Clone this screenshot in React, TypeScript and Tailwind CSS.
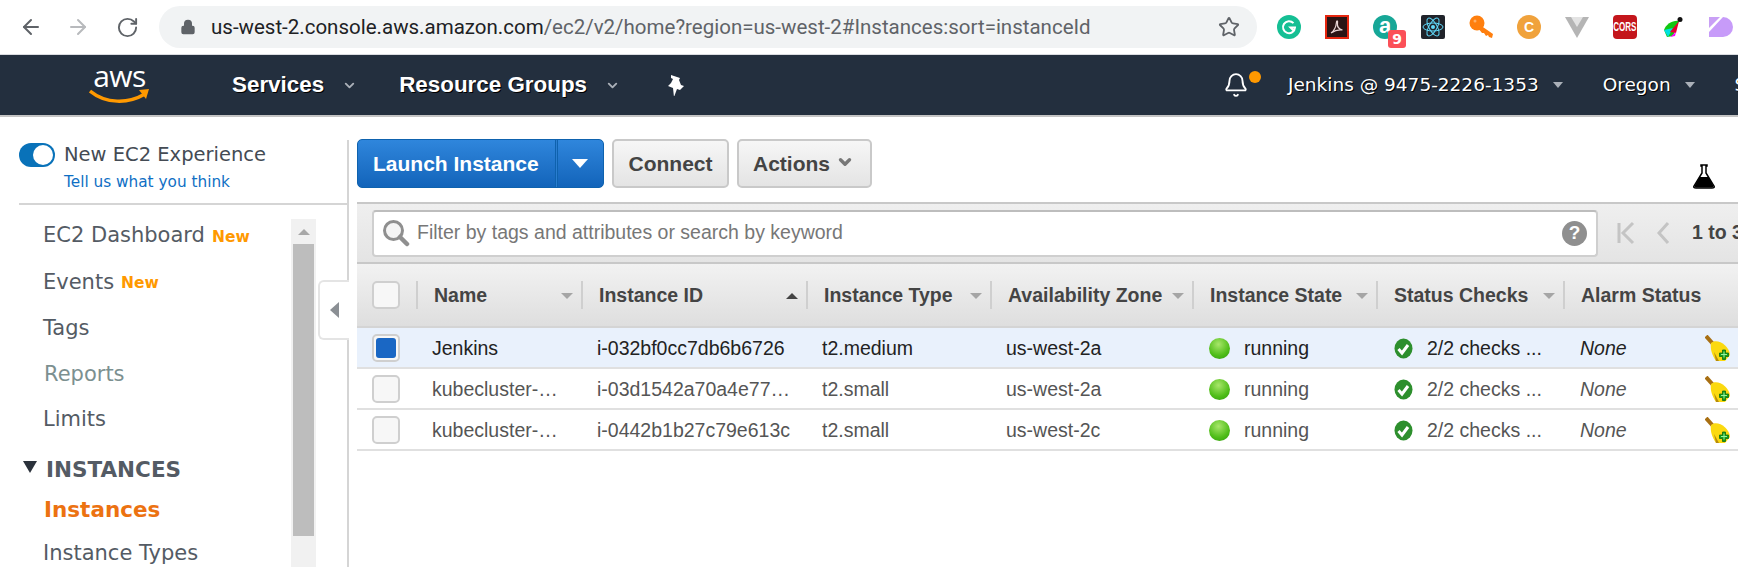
import { ArrowLeft, ArrowRight, RotateCw, Lock, Star, Bell, ChevronDown } from "lucide-react";

const cols = "grid grid-cols-[59px_165px_225px_184px_202px_184px_187px_174px]";

const headers = ["Name", "Instance ID", "Instance Type", "Availability Zone", "Instance State", "Status Checks", "Alarm Status"];

const rows = [
  { name: "Jenkins", id: "i-032bf0cc7db6b6726", type: "t2.medium", zone: "us-west-2a", selected: true },
  { name: "kubecluster-…", id: "i-03d1542a70a4e77…", type: "t2.small", zone: "us-west-2a", selected: false },
  { name: "kubecluster-…", id: "i-0442b1b27c79e613c", type: "t2.small", zone: "us-west-2c", selected: false },
];

function Extensions() {
  return (
    <div className="flex items-center gap-[24px] ml-[20px] flex-none">
      <div className="w-6 h-6 rounded-full bg-[#15bf94] flex items-center justify-center flex-none">
        <svg width="16" height="16" viewBox="0 0 16 16" fill="none" stroke="#fff" strokeWidth="2">
          <path d="M12.5 4.2A6 6 0 1 0 14 8.5H9.5l3 3" />
        </svg>
      </div>
      <div className="w-6 h-6 bg-[#2a1414] border-2 border-[#e5260f] flex items-center justify-center flex-none">
        <svg width="16" height="16" viewBox="0 0 16 16" fill="none" stroke="#e8d5d5" strokeWidth="1.2">
          <path d="M2 14c3-2 5-6 5.5-11 .2-2 1.5-1 1 1-.5 3 1 6 5 7-3-.5-7 0-11.5 3z" />
        </svg>
      </div>
      <div className="relative w-6 h-6 rounded-full bg-[#17a797] flex items-center justify-center flex-none">
        <span className="text-white font-bold text-[22px] leading-none -mt-[3px] font-['Liberation_Sans',sans-serif]">a</span>
        <span className="absolute left-[15px] top-[15px] w-[18px] h-[18px] rounded-[3px] bg-[#fb5058] text-white text-[14px] font-bold leading-[18px] text-center font-['DejaVu_Sans',sans-serif]">9</span>
      </div>
      <div className="w-6 h-6 rounded-[2px] bg-[#20232a] flex items-center justify-center flex-none">
        <svg width="22" height="22" viewBox="-11 -11 22 22" fill="none" stroke="#61dafb" strokeWidth="1">
          <circle r="2" fill="#61dafb" stroke="none" />
          <ellipse rx="10" ry="4" />
          <ellipse rx="10" ry="4" transform="rotate(60)" />
          <ellipse rx="10" ry="4" transform="rotate(120)" />
        </svg>
      </div>
      <svg width="24" height="24" viewBox="0 0 24 24" className="flex-none">
        <circle cx="8" cy="8" r="7.5" fill="#ff7f0e" />
        <path d="M11 10l13 9-1 4-3-1-1-2-2 1-2-3-2 0-4-5z" fill="#ff7f0e" />
        <circle cx="6" cy="6" r="1.5" fill="#ffb066" />
      </svg>
      <div className="w-6 h-6 rounded-full bg-[#f0a23c] flex items-center justify-center text-white text-[14px] font-bold flex-none font-['Liberation_Sans',sans-serif]">C</div>
      <svg width="24" height="24" viewBox="0 0 24 24" className="flex-none">
        <polygon points="0,2 24,2 12,23" fill="#b5b5b5" />
        <polygon points="6,2 18,2 12,12" fill="#e3e3e3" />
      </svg>
      <div className="w-6 h-6 rounded-[4px] bg-[#c4161c] flex items-center justify-center overflow-hidden text-white text-[13px] font-bold flex-none font-['Liberation_Sans',sans-serif]">
        <span className="scale-x-[0.62] flex-none">CORS</span>
      </div>
      <svg width="24" height="24" viewBox="0 0 24 24" className="flex-none">
        <path d="M3 15C5 9 12 5 18 6L12 21 6 22z" fill="#12c712" />
        <path d="M3 15l9-2-5 9z" fill="#00e0e0" />
        <path d="M9 17l9-11-3 12z" fill="#e5002e" />
        <path d="M9 22l6-5-1 4z" fill="#f0f" />
        <circle cx="19" cy="4.5" r="2.5" fill="#111" />
      </svg>
      <svg width="24" height="24" viewBox="0 0 24 24" className="flex-none">
        <path d="M0 2h11L0 13z" fill="#c9a0f5" />
        <path d="M0 17L14 2a10 10 0 0 1 0 20H8l-3 0H0z" fill="#c79bf9" />
      </svg>
    </div>
  );
}

function BrowserBar() {
  return (
    <div className="h-[55px] border-b border-[#dadce0] bg-white flex items-center pl-[19px] pr-0">
      <ArrowLeft size={24} strokeWidth={2} className="text-[#5f6368] flex-none" />
      <ArrowRight size={24} strokeWidth={2} className="text-[#b8babd] ml-[23px] flex-none" />
      <RotateCw size={23} strokeWidth={2} className="text-[#5f6368] ml-[26px] flex-none" />
      <div className="ml-[20px] w-[1098px] h-[42px] rounded-full bg-[#f1f3f4] flex items-center pl-[21px] pr-[17px] flex-none">
        <Lock size={16} fill="#5f6368" className="text-[#5f6368] flex-none" />
        <div className="ml-[15px] text-[20.5px] text-[#202124] whitespace-nowrap font-['Roboto',sans-serif] flex-1">
          us-west-2.console.aws.amazon.com
          <span className="text-[#5f6368]">/ec2/v2/home?region=us-west-2#Instances:sort=instanceId</span>
        </div>
        <Star size={22} strokeWidth={2} className="text-[#5f6368] flex-none" />
      </div>
      <Extensions />
    </div>
  );
}

function NavBar() {
  return (
    <div className="h-[60px] bg-[#232f3e] flex items-center text-white whitespace-nowrap overflow-hidden [text-shadow:1px_1px_0_#000]">
      <div className="ml-[89px] w-[61px] flex-none flex flex-col items-center">
        <span className="text-[30px] leading-[26px] tracking-[-0.5px] font-['Open_Sans',sans-serif] [text-shadow:none] -mt-[3px]">aws</span>
        <svg width="61" height="15" viewBox="0 0 61 15" fill="none">
          <path d="M1 2c16 13 38 13 55 3" stroke="#f90" strokeWidth="3.5" />
          <path d="M50 1l10-1-3 10z" fill="#f90" />
        </svg>
      </div>
      <span className="ml-[82px] flex-none text-[22.4px] font-bold font-['Liberation_Sans',sans-serif]">Services</span>
      <ChevronDown size={15} strokeWidth={3} className="ml-[18px] flex-none text-[#aab0b8]" />
      <span className="ml-[42px] flex-none text-[22.4px] font-bold font-['Liberation_Sans',sans-serif]">Resource Groups</span>
      <ChevronDown size={15} strokeWidth={3} className="ml-[18px] flex-none text-[#aab0b8]" />
      <svg width="20" height="22" viewBox="0 0 20 22" className="ml-[46px] flex-none" fill="#fff">
        <path d="M5 1l9 3-1 2 2 5 3 1-4 4-3-1-3 8-1-9-5-2 3-3 2-4-2-1z" />
      </svg>
      <div className="relative ml-[537px] flex-none w-[25px] h-[26px]">
        <Bell size={26} strokeWidth={1.7} />
        <span className="absolute -right-[13px] -top-[1px] w-3 h-3 rounded-full bg-[#f90]" />
      </div>
      <span className="ml-[40px] flex-none text-[18.5px] font-['DejaVu_Sans',sans-serif]">Jenkins @ 9475-2226-1353</span>
      <span className="ml-[14px] flex-none w-0 h-0 border-x-[5px] border-x-transparent border-t-[6px] border-t-[#aab0b8]" />
      <span className="ml-[40px] flex-none text-[18.5px] font-['DejaVu_Sans',sans-serif]">Oregon</span>
      <span className="ml-[14px] flex-none w-0 h-0 border-x-[5px] border-x-transparent border-t-[6px] border-t-[#aab0b8]" />
      <span className="ml-[40px] flex-none text-[18.5px] font-['DejaVu_Sans',sans-serif]">Support</span>
    </div>
  );
}

function NewTag() {
  return <span className="ml-[7px] mt-[3px] text-[15.5px] font-bold text-[#f90] font-['DejaVu_Sans',sans-serif]">New</span>;
}

function Sidebar() {
  return (
    <aside className="relative w-[349px] flex-none h-full flex flex-col font-['DejaVu_Sans',sans-serif]">
      <div className="h-[88px] flex-none pt-[26px] ml-[19px] border-b-2 border-[#d5d5d5] mr-[2px]">
        <div className="flex items-center h-[24px]">
          <div className="w-[36px] h-[24px] rounded-full bg-[#0972b9] flex items-center justify-end pr-[2px] flex-none">
            <span className="w-5 h-5 rounded-full bg-white" />
          </div>
          <span className="ml-[9px] text-[19.5px] text-[#444b54] leading-[24px]">New EC2 Experience</span>
        </div>
        <div className="ml-[45px] mt-[3px] text-[15.3px] leading-[24px] text-[#0f6fc4]">Tell us what you think</div>
      </div>
      <div className="flex flex-1 min-h-0 mr-[33px]">
        <div className="flex-1 pt-[8px] text-[21px] text-[#545b64] whitespace-nowrap">
          <div className="h-[46px] pl-[43px] flex items-center">EC2 Dashboard<NewTag /></div>
          <div className="h-[47px] pl-[43px] flex items-center">Events<NewTag /></div>
          <div className="h-[46px] pl-[43px] flex items-center">Tags</div>
          <div className="h-[45px] pl-[44px] flex items-center text-[#7c9090]">Reports</div>
          <div className="h-[45px] pl-[43px] flex items-center">Limits</div>
          <div className="mt-[8px] h-[40px] pl-[23px] flex items-center font-bold text-[21.5px]">
            <span className="w-0 h-0 border-x-[7.5px] border-x-transparent border-t-[12px] border-t-[#2b323b] -mt-[6px]" />
            <span className="ml-[9px]">INSTANCES</span>
          </div>
          <div className="h-[40px] pl-[44px] flex items-center font-bold text-[21.5px] text-[#ec7211]">Instances</div>
          <div className="h-[47px] pl-[43px] flex items-center">Instance Types</div>
        </div>
        <div className="w-[25px] flex-none mt-[14px] bg-[#f1f1f1] flex flex-col items-center">
          <div className="h-[25px] flex items-center justify-center flex-none">
            <span className="w-0 h-0 border-x-[6px] border-x-transparent border-b-[6px] border-b-[#a8a8a8]" />
          </div>
          <div className="w-[21px] h-[292px] bg-[#bdbdbd] flex-none" />
        </div>
      </div>
      <div className="absolute right-0 top-[23px] bottom-0 w-[2px] bg-[#d5d5d5]" />
      <div className="absolute right-0 top-[163px] w-[31px] h-[60px] bg-white border-2 border-r-0 border-[#e4e4e4] rounded-l-[6px] flex items-center justify-center">
        <span className="w-0 h-0 border-y-[8px] border-y-transparent border-r-[9px] border-r-[#8b8f94]" />
      </div>
    </aside>
  );
}

function Toolbar() {
  return (
    <div className="h-[85px] pt-[22px] flex items-start relative font-['Liberation_Sans',sans-serif] font-bold text-[21px]">
      <div className="w-[247px] h-[49px] rounded-[5px] border border-[#0e62ae] bg-gradient-to-b from-[#2f86dc] to-[#1264ba] text-white flex items-center">
        <span className="w-[197px] pl-[15px] whitespace-nowrap">Launch Instance</span>
        <span className="w-[3px] h-full border-x border-[#0e62ae] bg-[#2a7dd0]" />
        <span className="ml-[14px] w-0 h-0 border-x-[8px] border-x-transparent border-t-[9px] border-t-white" />
      </div>
      <div className="ml-[8px] w-[117px] h-[49px] rounded-[5px] border-2 border-[#c9c9c9] bg-gradient-to-b from-[#f6f6f6] to-[#e4e4e4] text-[#444] flex items-center justify-center">Connect</div>
      <div className="ml-[8px] w-[135px] h-[49px] rounded-[5px] border-2 border-[#c9c9c9] bg-gradient-to-b from-[#f6f6f6] to-[#e4e4e4] text-[#444] flex items-center pl-[14px]">
        Actions
        <ChevronDown size={18} strokeWidth={4.5} className="ml-[6px] -mt-[3px] flex-none text-[#777]" />
      </div>
      <svg width="22" height="25" viewBox="0 0 22 25" className="absolute left-[1336px] top-[47px]">
        <path d="M8 1h6v1h-1v7l8 13q1 2-2 2H3q-3 0-2-2L9 9V2H8z" fill="#fff" stroke="#000" strokeWidth="1.5" />
        <path d="M6.5 13h9l5 9q.5 1.5-1.5 1.5H3q-2 0-1.5-1.5z" fill="#000" />
      </svg>
    </div>
  );
}

function FilterBar() {
  return (
    <div className="h-[62px] border-y-2 border-[#c8c8c8] bg-gradient-to-b from-[#efefef] to-[#e4e4e4] flex items-center pl-[15px] font-['Liberation_Sans',sans-serif]">
      <div className="w-[1226px] h-[47px] bg-white rounded-[4px] border-2 border-[#cfcfcf] border-t-[#bdbdbd] flex items-center pl-[8px] pr-[9px] flex-none">
        <svg width="28" height="28" viewBox="0 0 28 28" fill="none" className="flex-none">
          <circle cx="11.5" cy="11.5" r="9" stroke="#8f8f8f" strokeWidth="3" fill="#f5f5f5" />
          <path d="M18 18l7 7" stroke="#8f8f8f" strokeWidth="4.5" strokeLinecap="round" />
        </svg>
        <span className="ml-[7px] -mt-[1px] text-[19.5px] text-[#777] flex-1 whitespace-nowrap">Filter by tags and attributes or search by keyword</span>
        <div className="w-[25px] h-[25px] rounded-full bg-[#8f8f8f] text-white font-bold text-[19px] flex items-center justify-center flex-none">?</div>
      </div>
      <svg width="20" height="26" viewBox="0 0 20 26" fill="none" stroke="#c4c4c4" strokeWidth="3" className="ml-[18px] flex-none">
        <path d="M3 3v20M17 3L7 13l10 10" />
      </svg>
      <svg width="14" height="26" viewBox="0 0 14 26" fill="none" stroke="#c4c4c4" strokeWidth="3" className="ml-[20px] flex-none">
        <path d="M12 3L3 13l9 10" />
      </svg>
      <span className="ml-[22px] text-[19.5px] font-bold text-[#444] whitespace-nowrap">1 to 3</span>
    </div>
  );
}

function HeaderRow() {
  return (
    <div className={`${cols} h-[64px] bg-gradient-to-b from-[#f2f2f2] to-[#dedede] border-b-2 border-[#d4d4d4] items-center font-['Liberation_Sans',sans-serif] text-[19.5px] font-bold text-[#444]`}>
      <div className="pl-[15px]">
        <div className="w-7 h-7 rounded-[5px] border-2 border-[#cfcfcf] bg-[#f7f7f7]" />
      </div>
      {headers.map((h, i) => (
        <div key={h} className="h-7 border-l-2 border-[#cfcfcf] pl-[16px] pr-[8px] pt-[1px] flex items-center justify-between whitespace-nowrap">
          <span>{h}</span>
          {i === 1 ? (
            <span className="w-0 h-0 flex-none border-x-[6px] border-x-transparent border-b-[6px] border-b-[#444]" />
          ) : i < 6 ? (
            <span className="w-0 h-0 flex-none border-x-[6px] border-x-transparent border-t-[6px] border-t-[#a5a5a5]" />
          ) : null}
        </div>
      ))}
    </div>
  );
}

function Broom() {
  return (
    <svg width="26" height="26" viewBox="0 0 26 26" className="flex-none">
      <path d="M1 1l8 9" stroke="#a86f12" strokeWidth="4" />
      <path d="M6 8C12 3 24 10 25 20L20 26 11 26C7 20 5 14 6 8z" fill="#fbd90f" />
      <path d="M9 17l5 9-3 0z" fill="#b58a10" />
      <path d="M17.5 15h3v3h3v3.5h-3v3h-3v-3h-3V18h3z" fill="#14a01c" stroke="#0c6c12" strokeWidth="0.8" />
      <path d="M18.5 16.5h1V19H22v1h-2.500v2.500h-1V20H16v-1h2.500z" fill="#9af09e" />
    </svg>
  );
}

function Row({ row }: { row: (typeof rows)[number] }) {
  return (
    <div className={`${cols} h-[41px] pt-[1px] border-b-2 border-[#e0e0e0] items-center font-['Liberation_Sans',sans-serif] text-[19.5px] whitespace-nowrap ${row.selected ? "bg-[#e9f1fc] text-[#222]" : "bg-white text-[#555]"}`}>
      <div className="pl-[15px]">
        <div className="w-7 h-7 rounded-[5px] border-2 border-[#cfcfcf] bg-[#f7f7f7] flex items-center justify-center">
          {row.selected && <span className="w-[20px] h-[20px] rounded-[3px] bg-[#1a67c4]" />}
        </div>
      </div>
      <div className="pl-[16px] mt-[2px]">{row.name}</div>
      <div className="pl-[16px] mt-[2px]">{row.id}</div>
      <div className="pl-[16px] mt-[2px]">{row.type}</div>
      <div className="pl-[16px] mt-[2px]">{row.zone}</div>
      <div className="pl-[17px] flex items-center">
        <span className="w-[21px] h-[21px] rounded-full bg-[radial-gradient(circle_at_45%_30%,#a8e66a,#4fbd18_60%,#2f9a10)] flex-none" />
        <span className="ml-[14px] mt-[2px]">running</span>
      </div>
      <div className="pl-[18px] flex items-center">
        <svg width="19" height="21" viewBox="0 0 19 21" className="flex-none">
          <ellipse cx="9.5" cy="10.5" rx="9" ry="10" fill="#2d8f2d" />
          <path d="M4.5 11l3.5 4 6-8" fill="none" stroke="#fff" strokeWidth="3" />
        </svg>
        <span className="ml-[14px] mt-[2px]">2/2 checks ...</span>
      </div>
      <div className="pl-[17px] flex items-center justify-between pr-[6px] italic">
        <span className="mt-[2px]">None</span>
        <Broom />
      </div>
    </div>
  );
}

export default function App() {
  return (
    <div className="w-[1738px] h-[567px] overflow-hidden bg-white flex flex-col">
      <BrowserBar />
      <NavBar />
      <div className="h-[2px] bg-[#c4c4c4] flex-none" />
      <div className="flex flex-1 min-h-0">
        <Sidebar />
        <main className="ml-[8px] flex-none w-[1381px]">
          <Toolbar />
          <FilterBar />
          <HeaderRow />
          {rows.map((r) => (
            <Row key={r.id} row={r} />
          ))}
        </main>
      </div>
    </div>
  );
}
